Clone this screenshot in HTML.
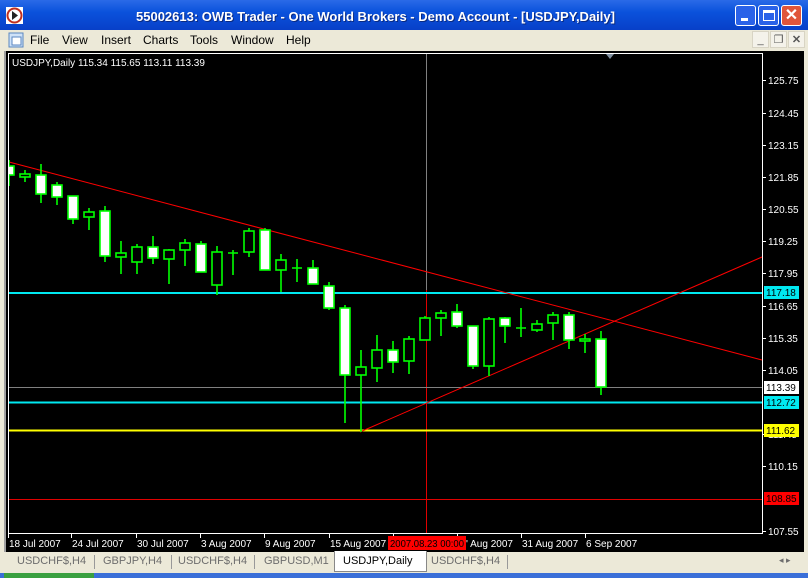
<!DOCTYPE html>
<html><head><meta charset="utf-8"><style>
*{margin:0;padding:0;box-sizing:border-box}
body{width:808px;height:578px;overflow:hidden;background:#ece9d8;font-family:"Liberation Sans",sans-serif;position:relative}
#title{position:absolute;left:0;top:0;width:808px;height:30px;background:linear-gradient(#2a6ae8,#0a52dc 40%,#0840c8);color:#fff;font-weight:bold;font-size:13px}
#title .t{position:absolute;left:136px;top:9px;white-space:nowrap;text-shadow:1px 1px #0a2a80}
.wb{position:absolute;top:5px;width:21px;height:21px;border:1px solid #fff;border-radius:3px;background:#2a62e8}
#menu{position:absolute;top:30px;left:0;width:808px;height:20px;font-size:12px;color:#000}
#menu span{position:absolute;top:3px}
.mb{position:absolute;top:31px;width:17px;height:17px;background:#f4f2ea;border:1px solid #d8d4c4;color:#555;font-size:11px;text-align:center;line-height:16px}
#tabs{position:absolute;top:552px;left:4px;width:800px;height:20px;font-size:11px;color:#6d6d6d}
#tabs span{position:absolute;top:3px}
</style></head><body>
<div id="title">
<svg style="position:absolute;left:6px;top:7px" width="17" height="17"><rect x="0" y="0" width="17" height="17" fill="#fff"/><circle cx="8.5" cy="8.5" r="7" fill="#fff" stroke="#c03020" stroke-width="2"/><path d="M6 4 L12 8.5 L6 13Z" fill="#222"/></svg>
<div class="t">55002613: OWB Trader - One World Brokers - Demo Account - [USDJPY,Daily]</div>
<div class="wb" style="left:735px"><div style="position:absolute;left:5px;top:12px;width:7px;height:3px;background:#fff"></div></div>
<div class="wb" style="left:758px"><div style="position:absolute;left:4px;top:4px;width:12px;height:11px;border:1px solid #fff;border-top-width:3px"></div></div>
<div class="wb" style="left:781px;background:#e0553a;color:#fff;font-size:16px;text-align:center;line-height:19px">✕</div>
</div>
<div id="menu">
<svg style="position:absolute;left:8px;top:2px" width="16" height="16"><rect x="1" y="1" width="14" height="14" fill="#cfe2f8" stroke="#5a86c0"/><rect x="4" y="5" width="9" height="8" fill="#fff" stroke="#5a86c0"/></svg>
<span style="left:30px">File</span><span style="left:62px">View</span><span style="left:101px">Insert</span><span style="left:143px">Charts</span><span style="left:190px">Tools</span><span style="left:231px">Window</span><span style="left:286px">Help</span>
</div>
<div class="mb" style="left:752px">_</div><div class="mb" style="left:770px">❐</div><div class="mb" style="left:788px;font-weight:bold">✕</div>
<svg style="position:absolute;left:0;top:51px" width="808" height="501" viewBox="0 51 808 501" font-family="Liberation Sans, sans-serif" font-size="10">
<defs><clipPath id="pc"><rect x="9" y="54" width="753" height="479"/></clipPath></defs>
<rect x="0" y="51" width="808" height="501" fill="#ece9d8"/>
<rect x="4" y="51" width="800" height="501" fill="#000"/>
<rect x="4" y="51" width="2" height="501" fill="#a0a0a0"/>
<line x1="8.5" y1="53.5" x2="762.5" y2="53.5" stroke="#fff"/>
<line x1="8.5" y1="53" x2="8.5" y2="533" stroke="#fff"/>
<line x1="762.5" y1="53" x2="762.5" y2="533" stroke="#fff"/>
<line x1="8" y1="533.5" x2="763" y2="533.5" stroke="#fff"/>
<path d="M606 54 L614 54 L610 59Z" fill="#8090a0"/>
<text x="12" y="66" fill="#fff">USDJPY,Daily  115.34 115.65 113.11 113.39</text>
<line x1="426.5" y1="54" x2="426.5" y2="290" stroke="#808080"/>
<line x1="426.5" y1="290" x2="426.5" y2="533" stroke="#e00000"/>
<g stroke="#fff">
<line x1="762" y1="80.5" x2="766" y2="80.5"/><line x1="762" y1="113.5" x2="766" y2="113.5"/><line x1="762" y1="145.5" x2="766" y2="145.5"/><line x1="762" y1="177.5" x2="766" y2="177.5"/><line x1="762" y1="209.5" x2="766" y2="209.5"/><line x1="762" y1="241.5" x2="766" y2="241.5"/><line x1="762" y1="273.5" x2="766" y2="273.5"/><line x1="762" y1="306.5" x2="766" y2="306.5"/><line x1="762" y1="338.5" x2="766" y2="338.5"/><line x1="762" y1="370.5" x2="766" y2="370.5"/><line x1="762" y1="434.5" x2="766" y2="434.5"/><line x1="762" y1="466.5" x2="766" y2="466.5"/><line x1="762" y1="531.5" x2="766" y2="531.5"/>
</g>
<g fill="#fff">
<text x="768" y="84">125.75</text><text x="768" y="117">124.45</text><text x="768" y="149">123.15</text><text x="768" y="181">121.85</text><text x="768" y="213">120.55</text><text x="768" y="245">119.25</text><text x="768" y="277">117.95</text><text x="768" y="310">116.65</text><text x="768" y="342">115.35</text><text x="768" y="374">114.05</text><text x="768" y="438">111.45</text><text x="768" y="470">110.15</text><text x="768" y="535">107.55</text>
</g>
<line x1="9" y1="293" x2="762" y2="293" stroke="#00e8f0" stroke-width="2"/>
<line x1="9" y1="402.5" x2="762" y2="402.5" stroke="#00e8f0" stroke-width="2"/>
<line x1="9" y1="387.5" x2="762" y2="387.5" stroke="#808080"/>
<line x1="9" y1="430.5" x2="762" y2="430.5" stroke="#ffff00" stroke-width="2"/>
<line x1="9" y1="499.5" x2="762" y2="499.5" stroke="#e00000"/>
<rect x="764" y="286" width="35" height="13" fill="#00e8f0"/><text x="766" y="296" fill="#000">117.18</text>
<rect x="764" y="381" width="35" height="13" fill="#fff"/><text x="766" y="391" fill="#000">113.39</text>
<rect x="764" y="396" width="35" height="13" fill="#00e8f0"/><text x="766" y="406" fill="#000">112.72</text>
<rect x="764" y="424" width="35" height="13" fill="#ffff00"/><text x="766" y="434" fill="#000">111.62</text>
<rect x="764" y="492" width="35" height="13" fill="#ff0000"/><text x="766" y="502" fill="#000">108.85</text>
<line x1="9" y1="162" x2="762" y2="360" stroke="#ff0000"/>
<line x1="360" y1="432" x2="762" y2="257" stroke="#ff0000"/>
<g stroke="#00ff00" stroke-width="1.6" clip-path="url(#pc)">
<path d="M9 160V186M25 170V182M41 164V203M57 182V205M73 196V224M89 208V230M105 206V262M121 241V274M137 244V274M153 236V264M169 249V284M185 239V266M201 241V272M217 246V295M233 250V275M249 228V257M265 228V270M281 254V292M297 259V282M313 260V284M329 282V310M345 305V423M361 350V432M377 335V382M393 341V373M409 336V374M425 316V340M441 310V336M457 304V328M473 326V369M489 317V376M505 317V343M521 308V337M537 320V332M553 312V340M569 312V349M585 334V353M601 331V395"/>
<g fill="#fff">
<rect x="4" y="166" width="10" height="9"/><rect x="36" y="175" width="10" height="19"/><rect x="52" y="185" width="10" height="12"/><rect x="68" y="196" width="10" height="23"/><rect x="100" y="211" width="10" height="45"/><rect x="148" y="247" width="10" height="11"/><rect x="196" y="244" width="10" height="28"/><rect x="260" y="230" width="10" height="40"/><rect x="308" y="268" width="10" height="16"/><rect x="324" y="286" width="10" height="22"/><rect x="340" y="308" width="10" height="67"/><rect x="388" y="350" width="10" height="12"/><rect x="452" y="312" width="10" height="14"/><rect x="468" y="326" width="10" height="40"/><rect x="500" y="318" width="10" height="8"/><rect x="564" y="315" width="10" height="25"/><rect x="596" y="339" width="10" height="48"/>
</g>
<g fill="#000">
<rect x="20" y="174" width="10" height="3"/><rect x="84" y="212" width="10" height="5"/><rect x="116" y="253" width="10" height="4"/><rect x="132" y="247" width="10" height="15"/><rect x="164" y="250" width="10" height="9"/><rect x="180" y="243" width="10" height="7"/><rect x="212" y="252" width="10" height="33"/><rect x="244" y="231" width="10" height="21"/><rect x="276" y="260" width="10" height="10"/><rect x="356" y="367" width="10" height="8"/><rect x="372" y="350" width="10" height="18"/><rect x="404" y="339" width="10" height="22"/><rect x="420" y="318" width="10" height="22"/><rect x="436" y="313" width="10" height="5"/><rect x="484" y="319" width="10" height="47"/><rect x="532" y="324" width="10" height="6"/><rect x="548" y="315" width="10" height="8"/><rect x="580" y="339" width="10" height="2"/>
</g>
<path d="M228 253H238M292 268H302M516 328H526"/>
</g>
<g stroke="#fff"><path d="M8.5 533V538M71.5 533V538M136.5 533V538M200.5 533V538M264.5 533V538M329.5 533V538M393.5 533V538M457.5 533V538M521.5 533V538M585.5 533V538"/></g>
<g fill="#fff">
<text x="9" y="547">18 Jul 2007</text><text x="72" y="547">24 Jul 2007</text><text x="137" y="547">30 Jul 2007</text><text x="201" y="547">3 Aug 2007</text><text x="265" y="547">9 Aug 2007</text><text x="330" y="547">15 Aug 2007</text><text x="466" y="547">' Aug 2007</text><text x="522" y="547">31 Aug 2007</text><text x="586" y="547">6 Sep 2007</text>
</g>
<rect x="388" y="536" width="78" height="14" fill="#ff0000"/><text x="390" y="547" fill="#000" textLength="74" lengthAdjust="spacingAndGlyphs">2007.08.23 00:00</text>
</svg>
<div id="tabs">
<span style="left:13px">USDCHF$,H4</span><span style="left:99px">GBPJPY,H4</span><span style="left:174px">USDCHF$,H4</span><span style="left:260px">GBPUSD,M1</span>
<div style="position:absolute;left:90px;top:3px;height:14px;border-left:1px solid #999"></div>
<div style="position:absolute;left:167px;top:3px;height:14px;border-left:1px solid #999"></div>
<div style="position:absolute;left:250px;top:3px;height:14px;border-left:1px solid #999"></div>
<div style="position:absolute;left:330px;top:-1px;width:93px;height:21px;background:#fff;border:1px solid #888;border-top:none"></div>
<span style="left:339px;color:#000">USDJPY,Daily</span>
<span style="left:427px">USDCHF$,H4</span>
<div style="position:absolute;left:503px;top:3px;height:14px;border-left:1px solid #999"></div>
<span style="left:775px;font-size:9px">◂ ▸</span>
</div>
<div style="position:absolute;left:0;top:573px;width:808px;height:5px;background:#3a6fd8"></div>
<div style="position:absolute;left:4px;top:573px;width:90px;height:5px;background:#3aa040"></div>
</body></html>
